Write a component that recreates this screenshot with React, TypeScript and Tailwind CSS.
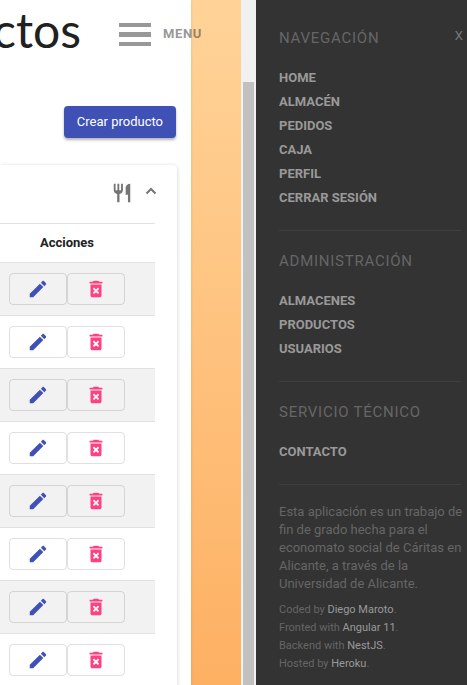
import React from "react";

const sections = [
  { title: "Navegación", links: ["Home", "Almacén", "Pedidos", "Caja", "Perfil", "Cerrar sesión"] },
  { title: "Administración", links: ["Almacenes", "Productos", "Usuarios"] },
  { title: "Servicio técnico", links: ["Contacto"] },
];

const credits = [
  ["Coded by", "Diego Maroto"],
  ["Fronted with", "Angular 11"],
  ["Backend with", "NestJS"],
  ["Hosted by", "Heroku"],
];

const rows = [1, 2, 3, 4, 5, 6, 7, 8];

function MaterialIcon({ d, className }: { d: string; className: string }) {
  return (
    <svg viewBox="0 0 24 24" fill="currentColor" aria-hidden="true" className={className}>
      <path d={d} />
    </svg>
  );
}

const PENCIL =
  "M3 17.25V21h3.75L17.81 9.94l-3.75-3.75L3 17.25zM20.71 7.04c.39-.39.39-1.02 0-1.41l-2.34-2.34c-.39-.39-1.02-.39-1.41 0l-1.83 1.83 3.75 3.75 1.83-1.83z";
const TRASH =
  "M6 19c0 1.1.9 2 2 2h8c1.1 0 2-.9 2-2V7H6v12zm2.46-7.12l1.41-1.41L12 12.59l2.12-2.12 1.41 1.41L13.41 14l2.12 2.12-1.41 1.41L12 15.41l-2.12 2.12-1.41-1.41L10.59 14l-2.13-2.12zM15.5 4l-1-1h-5l-1 1H5v2h14V4z";
const RESTAURANT =
  "M11 9H9V2H7v7H5V2H3v7c0 2.12 1.66 3.84 3.75 3.97V22h2.5v-9.03C11.34 12.84 13 11.12 13 9V2h-2v7zm5-3v8h2.5v8H21V2c-2.76 0-5 2.24-5 4z";

function ProductTable() {
  return (
    <table className="w-full border-collapse">
      <thead>
        <tr className="border-t border-[#dee2e6]">
          <th className="h-[39px] pr-[21px] text-center text-[13px] leading-[18px] font-bold text-[#212121]">
            Acciones
          </th>
        </tr>
      </thead>
      <tbody>
        {rows.map((row) => (
          <tr key={row} className="border-t border-[#dee2e6] odd:bg-[#f2f2f2]">
            <td className="h-[53px] pr-[21px]">
              <div className="flex justify-center">
                <button
                  aria-label="Editar"
                  className="flex h-8 w-[58px] items-center justify-center rounded border border-black/12 text-[#3f51b5]"
                >
                  <MaterialIcon d={PENCIL} className="size-[22px]" />
                </button>
                <button
                  aria-label="Eliminar"
                  className="flex h-8 w-[58px] items-center justify-center rounded border border-black/12 text-[#ff4081]"
                >
                  <MaterialIcon d={TRASH} className="size-[22px]" />
                </button>
              </div>
            </td>
          </tr>
        ))}
      </tbody>
    </table>
  );
}

function Content() {
  return (
    <main className="relative flex min-w-0 flex-1 bg-linear-to-b from-[#ffd398] to-[#fdb062] pr-[50px]">
      <div className="flex min-w-0 flex-1 flex-col overflow-hidden bg-white pr-3.5 shadow">
        <header className="flex h-[106px] shrink-0 justify-end overflow-hidden pr-24">
          <h1 className="font-[Lato,sans-serif] text-5xl leading-[60px] text-[#212121]">Productos</h1>
        </header>
        <div className="flex shrink-0 justify-end pr-px">
          <button className="h-8 rounded bg-[#3f51b5] px-[13px] text-[13px] text-white shadow-[0_2px_3px_rgba(0,0,0,0.3)]">
            Crear producto
          </button>
        </div>
        <section className="mt-[27px] flex-1 rounded-tr shadow-[0_1px_4px_rgba(0,0,0,0.2)]">
          <div className="flex h-[58px] items-center justify-end gap-3 pr-5 pb-0.5 text-[#757575]">
            <MaterialIcon d={RESTAURANT} className="size-[22px]" />
            <svg viewBox="0 0 12 14" className="h-3.5 w-3" fill="none" stroke="currentColor" strokeWidth="2" aria-hidden="true">
              <path d="M1.500 7.500 6 3l4.500 4.500" />
            </svg>
          </div>
          <div className="pr-[22px]">
            <ProductTable />
          </div>
        </section>
      </div>
      <button className="absolute top-[22px] right-[39px] flex items-center gap-3 opacity-50">
        <svg viewBox="0 0 32 24" className="h-6 w-8" fill="#333333" aria-hidden="true">
          <path d="M0 1h32v4H0zM0 10h32v5H0zM0 20h32v4H0z" />
        </svg>
        <span className="text-[13px] font-bold tracking-wider text-[#333333]">MENU</span>
      </button>
    </main>
  );
}

function Sidebar() {
  return (
    <aside className="w-[211px] shrink-0 bg-[#333333] pt-[26px] pr-1 pl-[23px] text-[13px] text-[#666666]">
      {sections.map((section, index) => (
        <nav key={section.title} aria-label={section.title} className="mb-[18px]">
          <div className="flex justify-between">
            <h2 className="pt-0.5 text-[15px] leading-5 tracking-wider uppercase">{section.title}</h2>
            {index === 0 && (
              <button aria-label="Cerrar" className="h-5 text-[#777777]">
                X
              </button>
            )}
          </div>
          <ul className="mt-[18px] mr-0.5 border-b border-[#3f3f3f] pb-5">
            {section.links.map((link) => (
              <li key={link} className="h-6 leading-6">
                <a href="#" className="font-bold text-[#999999] uppercase">
                  {link}
                </a>
              </li>
            ))}
          </ul>
        </nav>
      ))}
      <p className="leading-[18px]">
        Esta aplicación es un trabajo de fin de grado hecha para el economato social de Cáritas en Alicante, a través de
        la Universidad de Alicante.
      </p>
      <ul className="mt-2 text-[11px] leading-[18px]">
        {credits.map(([label, name]) => (
          <li key={name}>
            {label}{" "}
            <a href="#" className="text-[#999999]">
              {name}
            </a>
            .
          </li>
        ))}
      </ul>
    </aside>
  );
}

export default function App() {
  return (
    <div className="flex h-screen overflow-hidden bg-white font-[Roboto,sans-serif]">
      <Content />
      <div className="flex w-[15px] shrink-0 flex-col bg-[#f1f1f1] px-0.5 pt-[82px]" aria-hidden="true">
        <div className="flex-1 bg-[#c1c1c1]" />
      </div>
      <Sidebar />
    </div>
  );
}
